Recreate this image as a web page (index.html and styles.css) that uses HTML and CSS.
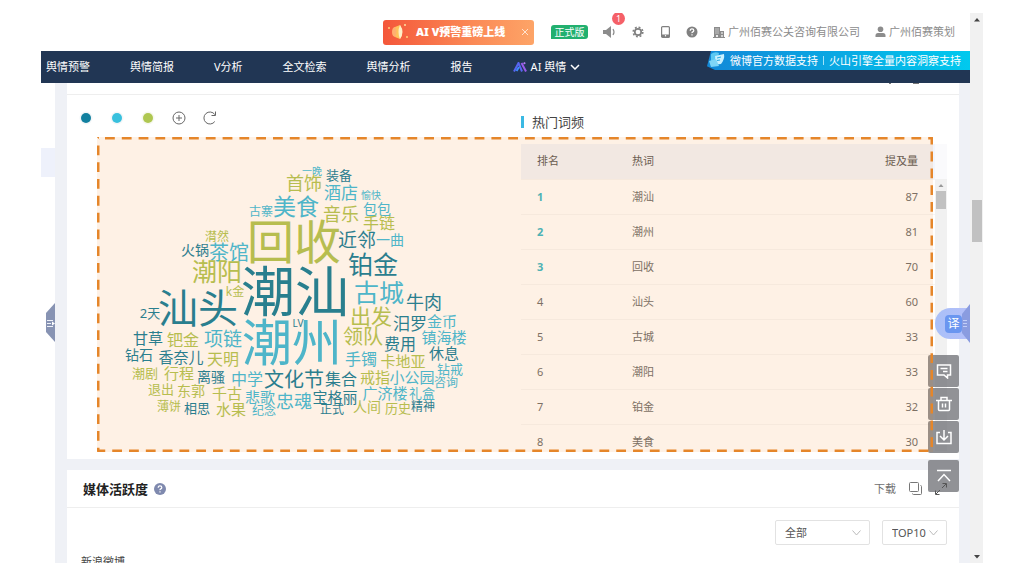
FILE: index.html
```
<!DOCTYPE html>
<html lang="zh-CN">
<head>
    <meta charset="UTF-8">
    <meta name="viewport" content="width=device-width, initial-scale=1.0">
    <title>舆情分析</title>
    <link rel="stylesheet" href="styles.css">
</head>
<body>

<div class="window">
    <div class="page">
        <header class="topbar">
            <div class="promo">
                <svg class="promo-icon" width="22" height="18" viewBox="0 0 22 18">
                    <ellipse cx="8" cy="9" rx="3" ry="5" fill="#ffb070"/>
                    <path d="M8 4l5-2q4 7 0 14l-5-2q3-5 0-10z" fill="#ffc35a"/>
                    <path d="M13 2q5 7 0 14q-3-7 0-14z" fill="#fff0c8"/>
                    <circle cx="2" cy="5" r="1" fill="#ffd27a"/>
                    <circle cx="18" cy="2" r="1" fill="#ffe0a0"/>
                    <circle cx="20" cy="14" r="1" fill="#ffd27a"/>
                </svg>
                <strong>AI V预警重磅上线</strong>
                <button class="promo-close" aria-label="关闭">
                    <svg width="8" height="8" viewBox="0 0 8 8"><path d="M1 1l6 6M7 1L1 7" stroke="#ffe3cf" fill="none"/></svg>
                </button>
            </div>
            <span class="version">正式版</span>
            <button class="tool" aria-label="通知">
                <svg width="14" height="12" viewBox="0 0 14 12">
                    <path d="M0 4h3l5-4v12L3 8H0z" fill="#8c8c8c"/>
                    <path d="M10 3q2 3 0 6" stroke="#8c8c8c" fill="none" stroke-width="1.2"/>
                </svg>
                <span class="count">1</span>
            </button>
            <button class="tool" aria-label="设置">
                <svg width="12" height="12" viewBox="0 0 12 12" fill="none" stroke="#808080">
                    <circle cx="6" cy="6" r="3.2" stroke-width="1.7"/>
                    <circle cx="6" cy="6" r="4.8" stroke-width="1.6" stroke-dasharray="1.9 1.87"/>
                </svg>
            </button>
            <button class="tool" aria-label="手机端">
                <svg width="12" height="12" viewBox="0 0 12 12">
                    <rect x="2.6" y="0.6" width="7.8" height="10.8" rx="1" fill="none" stroke="#808080" stroke-width="1.2"/>
                    <path d="M2.5 8.5h8V11h-8z" fill="#808080"/>
                    <circle cx="6.5" cy="9.8" r=".7" fill="#fff"/>
                </svg>
            </button>
            <button class="tool" aria-label="帮助">
                <svg width="12" height="12" viewBox="0 0 12 12">
                    <circle cx="6" cy="6" r="5.5" fill="#808080"/>
                    <path d="M4.2 4.8q0-2 1.8-2t1.8 1.6q0 1-1 1.5t-.8 1.2M6 8.2v1.2" stroke="#fff" stroke-width="1.2" fill="none"/>
                </svg>
            </button>
            <a class="account" href="#">
                <svg width="12" height="12" viewBox="0 0 12 12">
                    <path d="M1 1h6v10H1zM7 5h4v6H7z" fill="#8c8c8c"/>
                    <path d="M2.5 3h1M4.5 3h1M2.5 5h1M4.5 5h1M2.5 7h1M4.5 7h1M8 7h2" stroke="#fff"/>
                    <path d="M3.2 9h1.6v2H3.2zM8.4 9h1.2v2H8.4z" fill="#fff"/>
                    <path d="M0 11.5h12" stroke="#8c8c8c"/>
                </svg>广州佰赛公关咨询有限公司
            </a>
            <a class="account" href="#">
                <svg width="11" height="12" viewBox="0 0 11 12">
                    <circle cx="5.5" cy="3.3" r="2.8" fill="#8c8c8c"/>
                    <path d="M.5 11V9.5q0-2.500 2.500-2.500h5q2.500 0 2.500 2.500V11z" fill="#8c8c8c"/>
                </svg>广州佰赛策划
            </a>
        </header>

        <nav class="menu">
            <a href="#">舆情预警</a>
            <a href="#">舆情简报</a>
            <a href="#">V分析</a>
            <a href="#">全文检索</a>
            <a href="#">舆情分析</a>
            <a href="#">报告</a>
            <a href="#" class="menu-ai">
                <svg width="14" height="10" viewBox="0 0 14 10" fill="none" stroke-width="2">
                    <path d="M1 9.5L5.5 1L9 9.5" stroke="#5865f0"/>
                    <path d="M3.5 9L6 5" stroke="#3f8cff"/>
                    <path d="M8.5 1L13 9.500" stroke="#9a5bea"/>
                    <path d="M11 .5l.8 1.500" stroke="#b57af5"/>
                </svg>
                AI 舆情
                <svg width="10" height="6" viewBox="0 0 10 6"><path d="M1 1l4 4 4-4" stroke="#fff" stroke-width="1.5" fill="none"/></svg>
            </a>
            <div class="support">
                <svg class="support-icon" width="18" height="18" viewBox="0 0 18 18">
                    <path d="M3 3q4-3 8-1l-2 10-6 2z" fill="#5cc8f2"/>
                    <path d="M7 5l9-2q1 5-3 10l-8 1q3-4 2-9z" fill="#c9f0ff"/>
                    <path d="M1 10l7-2 3 7-8 1z" fill="#7fd6f7"/>
                    <path d="M9 7l4-1M9 9.5l3-.5" stroke="#29a9e0"/>
                </svg>
                微博官方数据支持<i></i>火山引擎全量内容洞察支持
            </div>
        </nav>

        <main class="content">
            <section class="card">
                <div class="card-top">
                    <svg width="30" height="2" viewBox="0 0 30 2"><path d="M0 .5h2M24 .5h7" stroke="#777"/></svg>
                </div>
                <div class="hot">
                    <div class="hot-cloud">
                        <div class="palette">
                            <button aria-label="深蓝"><svg width="14" height="14"><circle cx="7" cy="7" r="6.5" fill="#f3f6f8"/><circle cx="7" cy="7" r="5" fill="#12809f"/></svg></button>
                            <button aria-label="浅蓝"><svg width="14" height="14"><circle cx="7" cy="7" r="6.5" fill="#f3f6f8"/><circle cx="7" cy="7" r="5" fill="#38c0dd"/></svg></button>
                            <button aria-label="绿色"><svg width="14" height="14"><circle cx="7" cy="7" r="6.5" fill="#f6f8ee"/><circle cx="7" cy="7" r="5" fill="#afc751"/></svg></button>
                            <button aria-label="添加"><svg width="14" height="14" fill="none" stroke="#666"><circle cx="7" cy="7" r="6"/><path d="M7 4v6M4 7h6"/></svg></button>
                            <button aria-label="刷新"><svg width="14" height="14" fill="none" stroke="#666"><path d="M11.8 10.5A6 6 0 1 1 11.8 3.5M12.5 .5v4h-4"/></svg></button>
                        </div>
                        <svg class="cloud" viewBox="79 137 442 315">
                            <g class="deep">
                                <text x="295" y="312" font-size="54">潮汕</text>
                                <text x="198" y="323" font-size="40">汕头</text>
                                <text x="373" y="274" font-size="25">铂金</text>
                                <text x="357" y="247" font-size="19">近邻</text>
                                <text x="339" y="180" font-size="13">装备</text>
                                <text x="195" y="255" font-size="14">火锅</text>
                                <text x="150" y="318" font-size="13">2天</text>
                                <text x="298" y="327" font-size="10">LV</text>
                                <text x="424" y="309" font-size="18">牛肉</text>
                                <text x="410" y="330" font-size="17">汨罗</text>
                                <text x="400" y="350" font-size="16">费用</text>
                                <text x="444" y="359" font-size="15">休息</text>
                                <text x="148" y="344" font-size="15">甘草</text>
                                <text x="139" y="360" font-size="14">钻石</text>
                                <text x="181" y="363" font-size="15">香奈儿</text>
                                <text x="211" y="382" font-size="14">离骚</text>
                                <text x="294" y="387" font-size="20">文化节</text>
                                <text x="341" y="385" font-size="16">集合</text>
                                <text x="335" y="403" font-size="15">宝格丽</text>
                                <text x="332" y="414" font-size="12">正式</text>
                                <text x="423" y="411" font-size="12">精神</text>
                                <text x="197" y="413" font-size="13">相思</text>
                            </g>
                            <g class="light">
                                <text x="292" y="361" font-size="50">潮州</text>
                                <text x="379" y="302" font-size="25">古城</text>
                                <text x="296" y="215" font-size="23">美食</text>
                                <text x="229" y="260" font-size="20">茶馆</text>
                                <text x="223" y="346" font-size="19">项链</text>
                                <text x="341" y="199" font-size="17">酒店</text>
                                <text x="312" y="175" font-size="10">一晚</text>
                                <text x="371" y="199" font-size="10">愉快</text>
                                <text x="261" y="216" font-size="12">古寨</text>
                                <text x="377" y="214" font-size="14">包包</text>
                                <text x="390" y="245" font-size="14">一曲</text>
                                <text x="442" y="327" font-size="15">金币</text>
                                <text x="444" y="343" font-size="15">镇海楼</text>
                                <text x="361" y="365" font-size="16">手镯</text>
                                <text x="450" y="374" font-size="13">钻戒</text>
                                <text x="412" y="383" font-size="15">小公园</text>
                                <text x="446" y="387" font-size="12">咨询</text>
                                <text x="385" y="399" font-size="15">广济楼</text>
                                <text x="422" y="398" font-size="13">礼盒</text>
                                <text x="247" y="385" font-size="16">中学</text>
                                <text x="260" y="403" font-size="15">悲歌</text>
                                <text x="294" y="408" font-size="18">忠魂</text>
                                <text x="264" y="415" font-size="12">纪念</text>
                            </g>
                            <g class="green">
                                <text x="294" y="259" font-size="47">回收</text>
                                <text x="217" y="281" font-size="25">潮阳</text>
                                <text x="371" y="324" font-size="21">出发</text>
                                <text x="363" y="344" font-size="20">领队</text>
                                <text x="304" y="190" font-size="18">首饰</text>
                                <text x="341" y="221" font-size="18">音乐</text>
                                <text x="379" y="229" font-size="16">手链</text>
                                <text x="217" y="241" font-size="12">潸然</text>
                                <text x="235" y="296" font-size="12">k金</text>
                                <text x="183" y="346" font-size="16">钯金</text>
                                <text x="223" y="365" font-size="16">天明</text>
                                <text x="403" y="367" font-size="15">卡地亚</text>
                                <text x="375" y="383" font-size="15">戒指</text>
                                <text x="145" y="378" font-size="13">潮剧</text>
                                <text x="179" y="379" font-size="15">行程</text>
                                <text x="161" y="394" font-size="13">退出</text>
                                <text x="191" y="396" font-size="14">东郭</text>
                                <text x="227" y="399" font-size="15">千古</text>
                                <text x="169" y="411" font-size="12">薄饼</text>
                                <text x="231" y="415" font-size="15">水果</text>
                                <text x="367" y="412" font-size="14">人间</text>
                                <text x="398" y="413" font-size="13">历史</text>
                            </g>
                        </svg>
                    </div>

                    <div class="hot-rank">
                        <h3>热门词频</h3>
                        <div class="rank-box">
                            <table class="rank">
                                <thead>
                                    <tr><th class="col-no">排名</th><th>热词</th><th class="num">提及量</th></tr>
                                </thead>
                                <tbody>
                                    <tr><td class="top">1</td><td>潮汕</td><td class="num">87</td></tr>
                                    <tr><td class="top">2</td><td>潮州</td><td class="num">81</td></tr>
                                    <tr><td class="top">3</td><td>回收</td><td class="num">70</td></tr>
                                    <tr><td>4</td><td>汕头</td><td class="num">60</td></tr>
                                    <tr><td>5</td><td>古城</td><td class="num">33</td></tr>
                                    <tr><td>6</td><td>潮阳</td><td class="num">33</td></tr>
                                    <tr><td>7</td><td>铂金</td><td class="num">32</td></tr>
                                    <tr><td>8</td><td>美食</td><td class="num">30</td></tr>
                                </tbody>
                            </table>
                            <div class="rank-scroll">
                                <svg width="12" height="12" viewBox="0 0 12 12"><path d="M3.5 8L6 5l2.500 3z" fill="#999"/></svg>
                                <div class="rank-thumb"></div>
                            </div>
                        </div>
                    </div>
                    <svg class="frame"><rect x="1" y="1" rx="1" stroke-dasharray="9.8 7"/></svg>
                </div>
            </section>

            <section class="card">
                <div class="card-head">
                    <h2>媒体活跃度</h2>
                    <svg width="12" height="12" viewBox="0 0 12 12">
                        <circle cx="6" cy="6" r="6" fill="#7f89ae"/>
                        <path d="M4.2 4.8q0-2 1.800-2t1.800 1.600q0 1-1 1.500t-.8 1.200M6 8.2v1.2" stroke="#fff" stroke-width="1.2" fill="none"/>
                    </svg>
                    <div class="actions">
                        <a href="#">下载</a>
                        <button aria-label="复制">
                            <svg width="13" height="13" viewBox="0 0 13 13" fill="none" stroke="#777"><rect x=".5" y=".5" width="9" height="9" rx="1"/><path d="M3.5 11.5q0 1 1 1h7q1 0 1-1v-7q0-1-1-1"/></svg>
                        </button>
                        <button class="expand" aria-label="全屏">
                            <svg width="12" height="12" viewBox="0 0 12 12" fill="none" stroke="#555"><path d="M7 5l4-4M7.5 .5h4v4M5 7l-4 4M.5 7.5v4h4"/></svg>
                        </button>
                    </div>
                </div>
                <div class="filters">
                    <div class="select select-wide">
                        <select aria-label="媒体类型"><option>全部</option></select>
                        <svg width="9" height="6" viewBox="0 0 9 6"><path d="M.5 .5l4 4.500 4-4.500" stroke="#bbb" fill="none"/></svg>
                    </div>
                    <div class="select">
                        <select aria-label="数量"><option>TOP10</option></select>
                        <svg width="9" height="6" viewBox="0 0 9 6"><path d="M.5 .5l4 4.500 4-4.500" stroke="#bbb" fill="none"/></svg>
                    </div>
                </div>
                <p class="source">新浪微博</p>
            </section>
        </main>
    </div>

    <div class="scrollbar">
        <svg width="13" height="13" viewBox="0 0 13 13"><path d="M4 8.5l3-3.500 3 3.500z" fill="#444"/></svg>
        <div class="thumb"></div>
        <svg width="13" height="13" viewBox="0 0 13 13"><path d="M4 5l3 3.500L10 5z" fill="#444"/></svg>
    </div>

    <div class="side-tab"></div>

    <button class="drawer" aria-label="展开菜单">
        <svg width="9" height="39" viewBox="0 0 9 39">
            <path d="M9 0v39L0 29V10z" fill="#8793b3"/>
            <path d="M1 17.5h6M1 20.5h4M1 23.5h6" stroke="#eef1f8"/>
            <path d="M6 18.5l3 2-3 2z" fill="#fff"/>
        </svg>
    </button>

    <button class="translate">
        <span>译</span>
        <svg width="8" height="39" viewBox="0 0 8 39">
            <path d="M8 0v39L0 29V10z" fill="#8a9ce0"/>
            <path d="M1 16.5h4M1 19.5h4M1 22.5h4" stroke="#c3cff8"/>
        </svg>
    </button>

    <div class="floats">
        <button aria-label="反馈">
            <svg width="16" height="16" viewBox="0 0 16 16"><path d="M1.5 2h13v10h-3v3L8 12H1.5zM4.5 5.500h7M7 8.500h4.500"/></svg>
        </button>
        <button aria-label="删除">
            <svg width="16" height="16" viewBox="0 0 16 16"><path d="M0 4.5h16M5 4V1.500h6V4M2.5 5v8.500q0 1 1 1h9q1 0 1-1V5M6.500 7.500v4M9.500 7.500v4"/></svg>
        </button>
        <button aria-label="导入">
            <svg width="16" height="16" viewBox="0 0 16 16"><path d="M4 3.5H1v11h14v-11h-3M8 1v9.500M4 7l4 4 4-4"/></svg>
        </button>
        <button class="to-top" aria-label="返回顶部">
            <svg width="16" height="16" viewBox="0 0 16 16"><path d="M1 2.5h14M2 13l6-6.500 6 6.500"/></svg>
        </button>
    </div>
</div>

</body>
</html>
```
FILE: styles.css
```
* {
    box-sizing: border-box;
}
body {
    margin: 0;
    background-color: #fff;
    font-family: "Noto Sans", "Noto Sans CJK SC", sans-serif;
    font-size: 11px;
    line-height: 16px;
    color: #707070;
}
h2, h3, p {
    margin: 0;
    font-weight: normal;
}
a {
    color: inherit;
    text-decoration: none;
}
button {
    display: block;
    border: 0;
    padding: 0;
    background: none;
    font: inherit;
    cursor: pointer;
}
svg {
    display: block;
    flex: none;
}

/* window */
.window {
    position: relative;
    display: flex;
    height: calc(100vh - 26px);
    margin: 13px 41px;
    overflow: hidden;
}
.page {
    flex: 1;
    display: flex;
    flex-direction: column;
    min-width: 0;
}
.scrollbar {
    display: flex;
    flex-direction: column;
    width: 13px;
    background-color: #f1f1f1;
}
.thumb {
    width: 10px;
    height: 42px;
    margin: 174px 1px auto 2px;
    background-color: #c1c1c1;
}

/* top bar */
.topbar {
    flex: none;
    display: flex;
    justify-content: flex-end;
    align-items: center;
    gap: 15px;
    height: 38px;
    padding-right: 15px;
    color: #8c8c8c;
    white-space: nowrap;
}
.promo {
    display: flex;
    align-items: center;
    width: 151px;
    height: 25px;
    padding: 0 4px;
    border-radius: 3px;
    background: linear-gradient(90deg, #f4573a, #fb8a56 60%, #fda467);
    color: #fff;
}
.promo strong {
    flex: 1;
    margin-left: 7px;
    font-weight: 900;
}
.promo-close {
    padding: 1px;
}
.version {
    margin-left: 2px;
    width: 37px;
    border-radius: 3px 3px 3px 0;
    background-color: #22b06f;
    color: #fff;
    font-size: 10px;
    line-height: 14px;
    text-align: center;
}
.tool {
    position: relative;
}
.count {
    position: absolute;
    top: -14px;
    left: 9px;
    width: 13px;
    border-radius: 50%;
    background-color: #f56068;
    color: #fff;
    font-size: 9px;
    line-height: 13px;
}
.account {
    display: flex;
    align-items: center;
    gap: 3px;
}

/* menu */
.menu {
    flex: none;
    position: relative;
    display: flex;
    align-items: center;
    gap: 40px;
    height: 32px;
    padding-left: 5px;
    background-color: #213654;
    color: #fff;
    white-space: nowrap;
}
.menu-ai {
    display: flex;
    align-items: center;
    gap: 4px;
}
.support {
    position: absolute;
    top: 0;
    right: 0;
    display: flex;
    align-items: center;
    height: 19px;
    padding: 0 9px 0 23px;
    background: linear-gradient(90deg, #1389d8, #00c9ee);
    clip-path: polygon(4px 0, 100% 0, 100% 100%, 8px 100%, 0 80%);
}
.support-icon {
    position: absolute;
    left: 1px;
    top: 0;
}
.support i {
    width: 1px;
    height: 9px;
    margin: 0 5px;
    background-color: #9fe3f8;
}

/* cards */
.content {
    flex: 1;
    min-height: 0;
    margin-left: 14px;
    padding: 0 11px 0 12px;
    overflow: hidden;
    background-color: #eff1f6;
}
.card {
    margin-bottom: 11px;
    background-color: #fff;
}
.card-top {
    display: flex;
    justify-content: flex-end;
    height: 12px;
    padding-right: 40px;
    border-bottom: 1px solid #eee;
}
.hot {
    position: relative;
    display: flex;
    padding: 0 12px 8px;
}
.hot-cloud {
    flex: 442;
    padding-top: 16px;
}
.palette {
    display: flex;
    gap: 17px;
}
.cloud {
    width: 100%;
    margin-top: 12px;
    margin-bottom: -8px;
    text-anchor: middle;
}
.deep {
    fill: #12809f;
}
.light {
    fill: #3cbde0;
}
.green {
    fill: #b0c658;
}

/* the marked area */
.frame {
    position: absolute;
    z-index: 3;
    top: 42px;
    left: 30px;
    width: calc(100% - 56px);
    height: calc(100% - 49px);
    background-color: rgba(245, 115, 0, .1);
    pointer-events: none;
}
.frame rect {
    width: calc(100% - 2px);
    height: calc(100% - 2px);
    fill: none;
    stroke: #e5862a;
    stroke-width: 3px;
    stroke-dashoffset: -6px;
}

/* ranking */
.hot-rank {
    flex: 426;
    padding-top: 15px;
}
.hot-rank h3 {
    display: flex;
    align-items: center;
    gap: 8px;
    margin-bottom: 10px;
    color: #444;
    font-size: 13px;
    line-height: 24px;
}
.hot-rank h3::before {
    content: "";
    width: 3px;
    height: 12px;
    background-color: #3bb9e3;
}
.rank-box {
    display: flex;
    height: 307px;
    overflow: hidden;
}
.rank {
    flex: 1;
    align-self: flex-start;
    table-layout: fixed;
    border-collapse: collapse;
}
.rank th,
.rank td {
    height: 35px;
    padding: 0 17px 0 16px;
    border-bottom: 1px solid #f6f6f6;
    text-align: left;
    font-weight: normal;
}
.rank th {
    background-color: #f2f5fc;
    color: #5a5a5a;
}
.rank .col-no {
    width: 95px;
}
.rank .num {
    text-align: right;
}
.rank .top {
    color: #3bb9c9;
    font-weight: bold;
}
.rank-scroll {
    width: 12px;
    border-top: 35px solid #fafafc;
    background-color: #f1f1f1;
}
.rank-thumb {
    width: 10px;
    height: 18px;
    margin-left: 1px;
    background-color: #c1c1c1;
}

/* media activity */
.card-head {
    display: flex;
    align-items: center;
    gap: 6px;
    height: 38px;
    padding: 0 12px 0 16px;
    border-bottom: 1px solid #eee;
}
.card-head h2 {
    color: #222;
    font-size: 13px;
    font-weight: bold;
}
.actions {
    display: flex;
    align-items: center;
    gap: 13px;
    margin-left: auto;
}
.expand {
    position: relative;
    z-index: 3;
}
.filters {
    display: flex;
    justify-content: flex-end;
    gap: 12px;
    padding: 12px 12px 0;
}
.select {
    position: relative;
    width: 65px;
}
.select-wide {
    width: 95px;
}
.select select {
    appearance: none;
    display: block;
    width: 100%;
    height: 25px;
    padding: 0 9px;
    border: 1px solid #e2e2e2;
    border-radius: 2px;
    background-color: #fff;
    color: #555;
    font: inherit;
}
.select svg {
    position: absolute;
    top: 10px;
    right: 9px;
    pointer-events: none;
}
.source {
    padding: 9px 14px 20px;
    color: #444;
}

/* things floating over the page */
.side-tab {
    position: absolute;
    top: 135px;
    left: 0;
    width: 14px;
    height: 29px;
    background-color: #eef1fb;
}
.drawer {
    position: absolute;
    top: 290px;
    left: 5px;
}
.translate {
    position: absolute;
    z-index: 4;
    top: 291px;
    right: 13px;
    display: flex;
    align-items: center;
    justify-content: flex-end;
    width: 35px;
    height: 39px;
}
.translate::before {
    content: "";
    position: absolute;
    top: 4px;
    left: 0;
    width: 35px;
    height: 31px;
    border-radius: 16px 0 0 16px;
    background: linear-gradient(90deg, #a9c0f8, #b4bff9);
}
.translate span {
    position: relative;
    width: 17px;
    height: 18px;
    border-radius: 4px;
    background-color: #6a96f0;
    color: #fff;
    font-size: 12px;
    line-height: 18px;
}
.translate svg {
    position: relative;
}
.floats {
    position: absolute;
    z-index: 2;
    top: 342px;
    right: 24px;
    display: flex;
    flex-direction: column;
    gap: 1px;
}
.floats button {
    display: flex;
    align-items: center;
    justify-content: center;
    width: 31px;
    height: 32px;
    border-radius: 2px;
    background-color: rgba(118, 119, 124, .8);
}
.floats .to-top {
    margin-top: 6px;
}
.floats svg {
    fill: none;
    stroke: #fff;
    stroke-width: 1.5px;
}
```
